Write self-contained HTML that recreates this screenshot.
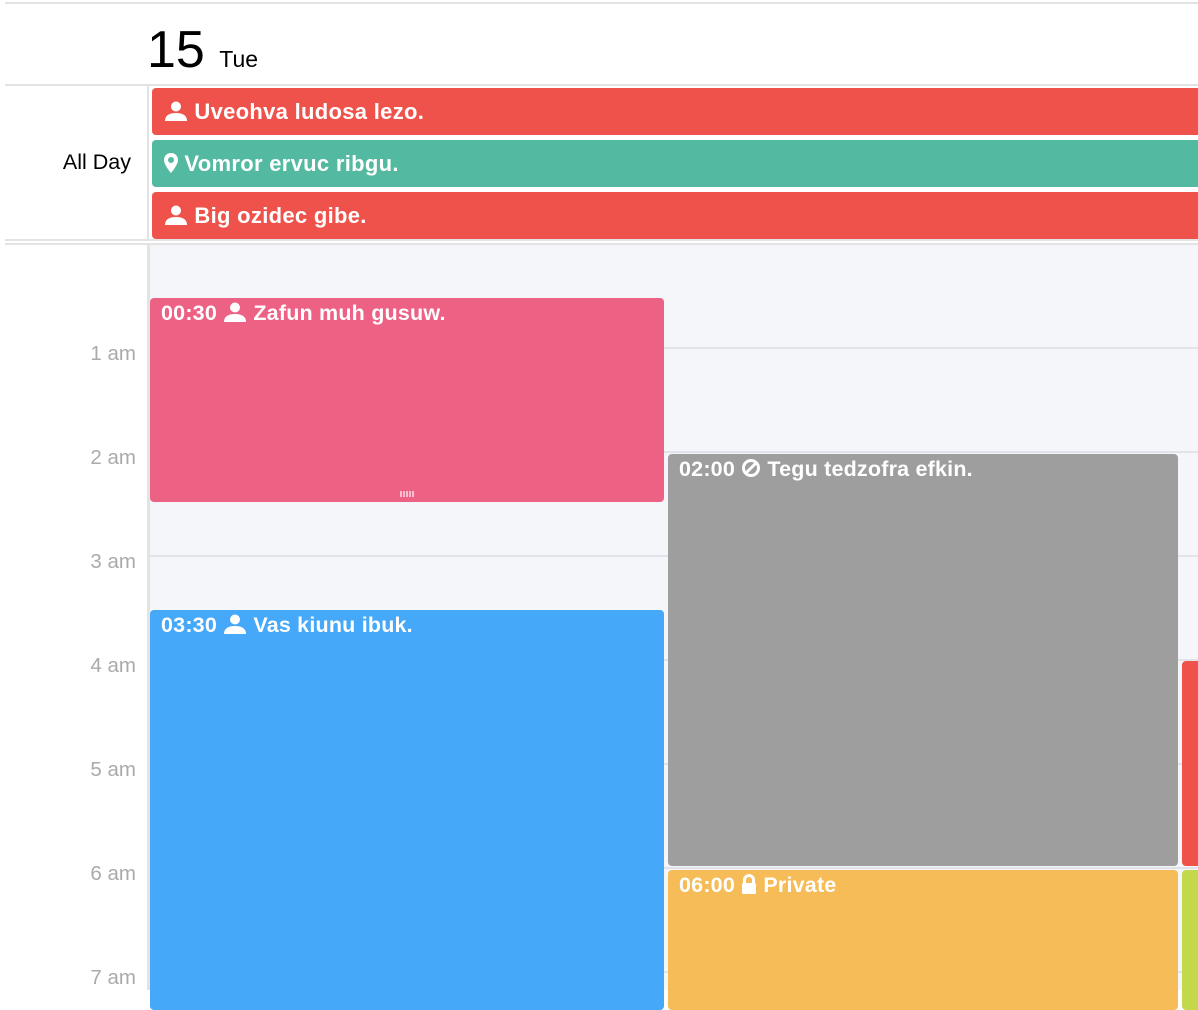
<!DOCTYPE html>
<html><head><style>
*{margin:0;padding:0;box-sizing:border-box}
body{width:1198px;height:990px;overflow:hidden;background:#fff;font-family:"Liberation Sans","DejaVu Sans",sans-serif;position:relative}
.a{position:absolute}
.ev{position:absolute;border-radius:4px;color:#fff;font-size:21.5px;font-weight:bold;padding:3px 11px;white-space:nowrap;overflow:hidden;letter-spacing:0.2px}
.ad{position:absolute;left:152px;right:0;height:47px;border-radius:4px 0 0 4px;color:#fff;font-size:22px;font-weight:bold;padding:11px 12px;white-space:nowrap;letter-spacing:0.3px}
.hl{position:absolute;left:150px;right:0;height:2px;background:#e2e3e8}
.lb{position:absolute;right:1062px;color:#aaa;font-size:20.5px;text-align:right}
svg{vertical-align:-2px}
</style></head><body>
<div class="a" style="left:5px;right:0;top:2px;height:2px;background:#e3e3e3"></div>
<div class="a" style="left:147px;top:18px;font-size:52px;color:#000;line-height:64px">15 <span style="font-size:23px">Tue</span></div>
<div class="a" style="left:5px;right:0;top:84px;height:2px;background:#e3e3e3"></div>
<div class="a" style="left:147px;top:86px;width:2px;height:154px;background:#e3e3e3"></div>
<div class="a" style="right:1067px;top:150px;font-size:21.5px;color:#000">All Day</div>
<div class="ad" style="top:88px;background:#ef524b"><svg width="24" height="20" viewBox="0 0 24 20"><circle cx="12" cy="5.5" r="5" fill="#fff"/><path d="M1 20c0-6 5-8 11-8s11 2 11 8z" fill="#fff"/></svg> Uveohva ludosa lezo.</div>
<div class="ad" style="top:140px;background:#53b9a0"><svg width="14" height="20" viewBox="0 0 14 20"><path d="M7 0C3 0 0 3 0 7c0 5 7 13 7 13s7-8 7-13c0-4-3-7-7-7zm0 10a3 3 0 110-6 3 3 0 010 6z" fill="#fff"/></svg> Vomror ervuc ribgu.</div>
<div class="ad" style="top:192px;background:#ef524b"><svg width="24" height="20" viewBox="0 0 24 20"><circle cx="12" cy="5.5" r="5" fill="#fff"/><path d="M1 20c0-6 5-8 11-8s11 2 11 8z" fill="#fff"/></svg> Big ozidec gibe.</div>
<div class="a" style="left:5px;right:0;top:239px;height:2px;background:#e3e3e3"></div>
<div class="a" style="left:5px;right:0;top:243px;height:2px;background:#e3e3e3"></div>
<div class="a" style="left:150px;right:0;top:245px;bottom:0;background:#f5f6fa"></div>
<div class="a" style="left:147px;top:245px;width:3px;bottom:0;background:#e3e3e3"></div>
<div class="hl" style="top:347px"></div><div class="hl" style="top:451px"></div><div class="hl" style="top:555px"></div><div class="hl" style="top:659px"></div><div class="hl" style="top:763px"></div><div class="hl" style="top:867px"></div><div class="hl" style="top:971px"></div>
<div class="lb" style="top:342px">1 am</div><div class="lb" style="top:446px">2 am</div><div class="lb" style="top:550px">3 am</div><div class="lb" style="top:654px">4 am</div><div class="lb" style="top:758px">5 am</div><div class="lb" style="top:862px">6 am</div><div class="lb" style="top:966px">7 am</div>
<div class="ev" style="left:150px;width:514px;top:298px;height:204px;background:#ed6184">00:30 <svg width="24" height="20" viewBox="0 0 24 20"><circle cx="12" cy="5.5" r="5" fill="#fff"/><path d="M1 20c0-6 5-8 11-8s11 2 11 8z" fill="#fff"/></svg> Zafun muh gusuw.<div class="a" style="left:250px;top:193px;width:15px;height:6px;background:repeating-linear-gradient(90deg,rgba(255,255,255,.6) 0 2px,transparent 2px 3px)"></div></div>
<div class="ev" style="left:150px;width:514px;top:610px;height:400px;background:#45a8f9">03:30 <svg width="24" height="20" viewBox="0 0 24 20"><circle cx="12" cy="5.5" r="5" fill="#fff"/><path d="M1 20c0-6 5-8 11-8s11 2 11 8z" fill="#fff"/></svg> Vas kiunu ibuk.</div>
<div class="ev" style="left:668px;width:510px;top:454px;height:412px;background:#9e9e9e">02:00 <svg width="20" height="20" viewBox="0 0 20 20"><circle cx="10" cy="10" r="7.5" fill="none" stroke="#fff" stroke-width="3"/><path d="M5 15L15 5" stroke="#fff" stroke-width="3"/></svg> Tegu tedzofra efkin.</div>
<div class="ev" style="left:668px;width:510px;top:870px;height:140px;background:#f5bc57">06:00 <svg width="16" height="20" viewBox="0 0 16 20"><path d="M3.5 9V6a4.5 4.5 0 019 0v3" fill="none" stroke="#fff" stroke-width="3"/><rect x="1" y="9" width="14" height="11" rx="1.5" fill="#fff"/></svg> Private</div>
<div class="ev" style="left:1182px;width:30px;top:661px;height:205px;background:#ef524b"></div>
<div class="ev" style="left:1182px;width:30px;top:870px;height:140px;background:#c3d84a"></div>
</body></html>
